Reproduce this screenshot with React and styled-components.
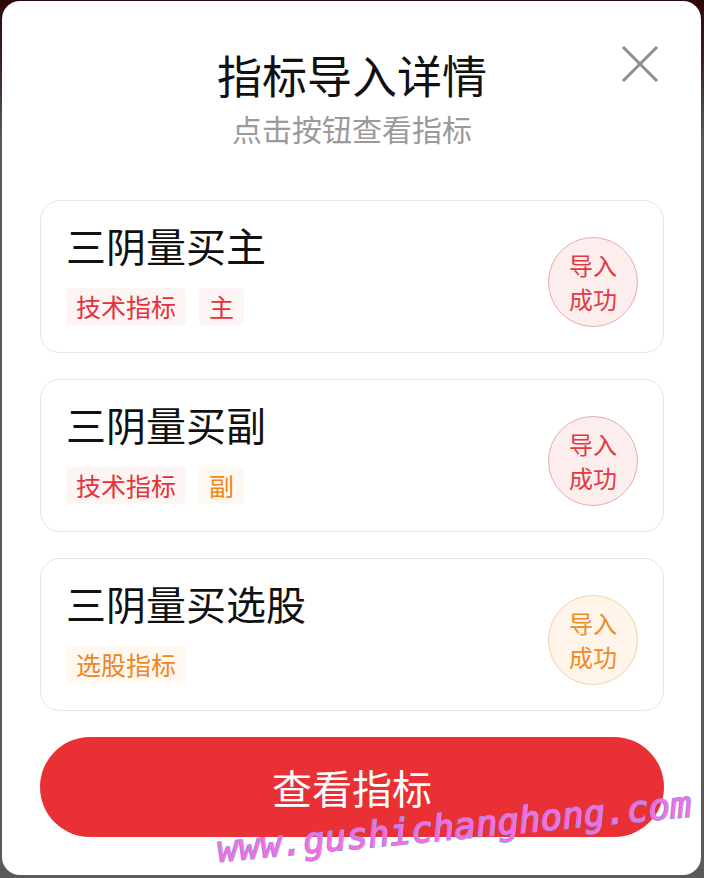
import React from "react";
import styled, { createGlobalStyle } from "styled-components";

const Global = createGlobalStyle`
  html, body { margin: 0; padding: 0; }
  body {
    background: linear-gradient(180deg, #2b0808 0px, #3a2222 60px, #5a5a5a 140px, #5a5a5a 100%);
    font-family: "Noto Sans CJK SC", "Noto Sans", sans-serif;
  }
  #root { padding: 1px 3px 3px 2px; }
`;

const Modal = styled.div`
  position: relative;
  width: 699px;
  height: 874px;
  box-sizing: border-box;
  background: #fff;
  border-radius: 18px;
  padding: 45px 37px 38px 38px;
  display: flex;
  flex-direction: column;
  overflow: hidden;
`;

const Title = styled.h1`
  margin: 0;
  text-align: center;
  font-size: 45px;
  line-height: 57px;
  font-weight: 400;
  color: #111;
`;

const Subtitle = styled.p`
  margin: 5px 0 0;
  text-align: center;
  font-size: 30px;
  line-height: 40px;
  color: #9a9a9a;
`;

const CloseBtn = styled.button`
  position: absolute;
  top: 44px;
  right: 42px;
  width: 38px;
  height: 38px;
  padding: 0;
  border: none;
  background: transparent;
  cursor: pointer;
`;

const List = styled.div`
  margin-top: 52px;
  display: flex;
  flex-direction: column;
  gap: 26px;
`;

const Card = styled.div`
  display: flex;
  align-items: center;
  justify-content: space-between;
  border: 1px solid #e6e6e6;
  border-radius: 20px;
  padding: 18px 25px 27px 25px;
`;

const Info = styled.div`
  display: flex;
  flex-direction: column;
`;

const CardTitle = styled.div`
  font-size: 40px;
  line-height: 52px;
  color: #111;
`;

const Tags = styled.div`
  margin-top: 17px;
  display: flex;
  gap: 13px;
`;

const Tag = styled.span`
  font-size: 25px;
  line-height: 37px;
  padding: 0 10px;
  border-radius: 4px;
  color: ${(p) => (p.$tone === "orange" ? "#ef8520" : "#e5323a")};
  background: ${(p) => (p.$tone === "orange" ? "#fef8f1" : "#fdf4f4")};
`;

const Badge = styled.div`
  flex: none;
  width: 90px;
  height: 90px;
  box-sizing: border-box;
  border-radius: 50%;
  margin: 18px 0 -2px;
  display: flex;
  flex-direction: column;
  align-items: center;
  justify-content: center;
  font-size: 24px;
  line-height: 34px;
  border: 1px solid ${(p) => (p.$tone === "orange" ? "#f2d0a8" : "#e8aab0")};
  background: ${(p) => (p.$tone === "orange" ? "#fff5ea" : "#fdeeee")};
  color: ${(p) => (p.$tone === "orange" ? "#ef8a24" : "#e23a44")};
`;

const Button = styled.button`
  flex: none;
  margin-top: 26px;
  height: 100px;
  border: none;
  border-radius: 50px;
  background: #e83035;
  color: #fff;
  font-family: "Noto Sans CJK SC", "Noto Sans", sans-serif;
  font-size: 40px;
  cursor: pointer;
`;

const Watermark = styled.div`
  position: absolute;
  left: 216px;
  top: 831px;
  font-family: "DejaVu Sans Mono", monospace;
  font-size: 36px;
  line-height: 36px;
  font-weight: 400;
  font-style: oblique;
  white-space: nowrap;
  color: #f66fd9;
  -webkit-text-stroke: 1.5px #968ff4;
  paint-order: stroke fill;
  transform-origin: 0 30px;
  transform: rotate(-5.5deg);
  pointer-events: none;
`;

const items = [
  { name: "三阴量买主", tags: [{ t: "技术指标" }, { t: "主" }], tone: "red" },
  { name: "三阴量买副", tags: [{ t: "技术指标" }, { t: "副", tone: "orange" }], tone: "red" },
  { name: "三阴量买选股", tags: [{ t: "选股指标", tone: "orange" }], tone: "orange" },
];

export default function App() {
  return (
    <>
      <Global />
      <Modal>
        <Title>指标导入详情</Title>
        <Subtitle>点击按钮查看指标</Subtitle>
        <CloseBtn aria-label="关闭">
          <svg width="38" height="38" viewBox="0 0 38 38">
            <path d="M2 2 L36 36 M36 2 L2 36" stroke="#8c8c8c" strokeWidth="3" fill="none" />
          </svg>
        </CloseBtn>
        <List>
          {items.map((it) => (
            <Card key={it.name}>
              <Info>
                <CardTitle>{it.name}</CardTitle>
                <Tags>
                  {it.tags.map((tg) => (
                    <Tag key={tg.t} $tone={tg.tone}>{tg.t}</Tag>
                  ))}
                </Tags>
              </Info>
              <Badge $tone={it.tone}>
                <span>导入</span>
                <span>成功</span>
              </Badge>
            </Card>
          ))}
        </List>
        <Button>查看指标</Button>
        <Watermark>www.gushichanghong.com</Watermark>
      </Modal>
    </>
  );
}
